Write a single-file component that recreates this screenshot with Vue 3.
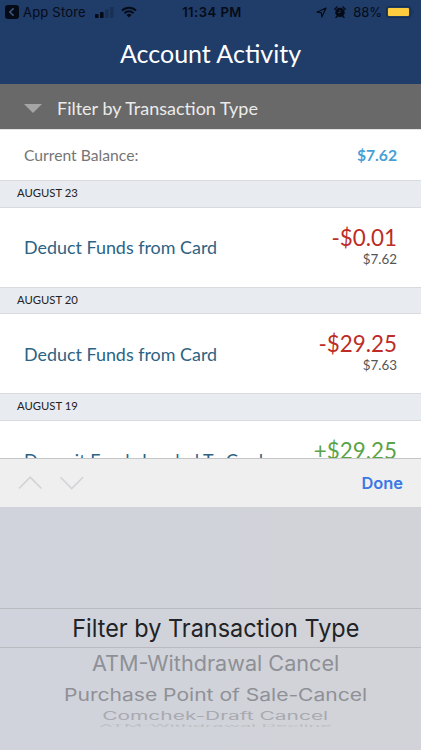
<template>
  <div class="screen">
    <header class="top">
      <div class="status">
        <div class="status-left">
          <svg class="back-icon" width="14" height="14" viewBox="0 0 14 14">
            <rect width="14" height="14" rx="3" fill="#050b16" />
            <path d="M8.6 3.4 4.8 7l3.8 3.6" fill="none" stroke="#3d5780" stroke-width="1.5" />
          </svg>
          <span class="app-store">App Store</span>
          <svg class="signal" width="19" height="12" viewBox="0 0 19 12">
            <rect x="0" y="8" width="3.6" height="4" rx="0.8" fill="#050b16" />
            <rect x="5" y="6" width="3.6" height="6" rx="0.8" fill="#050b16" />
            <rect x="10" y="3.5" width="3.6" height="8.5" rx="0.8" fill="#1a3156" />
            <rect x="15" y="1" width="3.6" height="11" rx="0.8" fill="#1a3156" />
          </svg>
          <svg class="wifi" width="16" height="12" viewBox="0 0 16 12">
            <path d="M1 4.6a10 10 0 0 1 14 0M3.5 7.2a6.4 6.4 0 0 1 9 0" fill="none" stroke="#050b16" stroke-width="2" />
            <path d="M8 11.5 5.5 9a3.6 3.6 0 0 1 5 0z" fill="#050b16" />
          </svg>
        </div>
        <span class="time">11:34 PM</span>
        <div class="status-right">
          <svg class="location" width="11" height="11" viewBox="0 0 11 11">
            <path d="M10 1 1 5.2l4.3.5.5 4.3z" fill="none" stroke="#050b16" stroke-width="1.2" stroke-linejoin="round" />
          </svg>
          <svg class="alarm" width="12" height="12" viewBox="0 0 12 12">
            <circle cx="6" cy="6.4" r="4.7" fill="#050b16" />
            <path d="M.8 3.2 3 1M11.2 3.2 9 1M3 10.2l-1 1.2M9 10.2l1 1.2" stroke="#050b16" stroke-width="1.5" stroke-linecap="round" />
            <path d="M6 4v2.6H4" fill="none" stroke="#1f3d6b" stroke-width=".8" />
          </svg>
          <span class="percent">88%</span>
          <svg class="battery" width="29" height="12" viewBox="0 0 29 12">
            <rect x=".5" y=".5" width="24.5" height="11" rx="2.6" fill="none" stroke="#172b4b" />
            <rect x="2" y="2" width="21" height="8" rx="1" fill="#fdcd3f" />
            <path d="M27 4q1.8 2 0 4z" fill="#172b4b" />
          </svg>
        </div>
      </div>
      <h1 class="title">Account Activity</h1>
    </header>

    <div class="filter">
      <span class="triangle"></span>
      <span class="filter-label">{{ options[0].label }}</span>
    </div>

    <div class="balance">
      <span class="balance-label">Current Balance:</span>
      <span class="balance-value">$7.62</span>
    </div>

    <main class="list">
      <section v-for="item in transactions" :key="item.date">
        <h2 class="date">{{ item.date }}</h2>
        <div class="row">
          <span class="name">{{ item.name }}</span>
          <div class="sums">
            <span class="amount" :class="{ plus: item.plus }">{{ item.amount }}</span>
            <span v-if="item.balance" class="rest">{{ item.balance }}</span>
          </div>
        </div>
      </section>
    </main>

    <div class="toolbar">
      <svg class="arrows" width="66" height="16" viewBox="0 0 66 16">
        <path d="M1 13.5 12.2 2.2l11.2 11.3M42.5 2.2l11.2 11.3L65 2.2" fill="none" stroke="#d2d3d5" stroke-width="1.6" />
      </svg>
      <button class="done">Done</button>
    </div>

    <div class="picker">
      <div v-for="(option, i) in options" :key="i" class="option" :class="'option-' + i">
        <span>{{ option.label }}</span>
      </div>
    </div>
  </div>
</template>

<script setup>
const transactions = [
  { date: 'AUGUST 23', name: 'Deduct Funds from Card', amount: '-$0.01', balance: '$7.62' },
  { date: 'AUGUST 20', name: 'Deduct Funds from Card', amount: '-$29.25', balance: '$7.63' },
  { date: 'AUGUST 19', name: 'Deposit Funds Loaded To Card', amount: '+$29.25', plus: true }
];

const options = [
  { label: 'Filter by Transaction Type' },
  { label: 'ATM-Withdrawal Cancel' },
  { label: 'Purchase Point of Sale-Cancel' },
  { label: 'Comchek-Draft Cancel' },
  { label: 'ATM-Withdrawal Decline' }
];
</script>

<style>
body {
  background: #fff;
}
</style>

<style scoped>
.screen {
  width: 421px;
  height: 750px;
  display: flex;
  flex-direction: column;
  overflow: hidden;
  background: #fff;
  font-family: Lato, sans-serif;
}

.top {
  flex: none;
  height: 84px;
  background: #203c69;
}

.status {
  height: 24px;
  display: grid;
  grid-template-columns: 1fr auto 1fr;
  align-items: center;
  color: #050b16;
  font-family: Inter, sans-serif;
  font-size: 13px;
}

.status-left,
.status-right {
  display: flex;
  align-items: center;
}

.status-left {
  padding-left: 5px;
}

.status-right {
  justify-content: flex-end;
  padding-right: 6px;
}

.app-store {
  margin-left: 4px;
  letter-spacing: 0.2px;
}

.signal {
  margin-left: 9px;
}

.wifi {
  margin-left: 7px;
}

.time {
  padding-left: 3px;
  font-weight: 600;
  letter-spacing: 0.5px;
}

.alarm {
  margin-left: 7px;
}

.percent {
  margin: 0 4px 0 7px;
}

.title {
  margin: 13px 0 0;
  color: #fff;
  font-size: 25px;
  line-height: 32px;
  font-weight: 400;
  text-align: center;
}

.filter {
  flex: none;
  height: 46px;
  display: flex;
  align-items: center;
  padding: 3px 0 0 24px;
  border-bottom: 1px solid #e4e4e4;
  background: #696969;
  box-sizing: border-box;
}

.triangle {
  border: 9px solid transparent;
  border-top-color: #a5a5a5;
  border-bottom: 0;
}

.filter-label {
  margin-left: 15px;
  color: #ebebeb;
  font-size: 18px;
}

.balance {
  flex: none;
  height: 50px;
  display: flex;
  align-items: center;
  justify-content: space-between;
  padding: 0 24px;
  box-sizing: border-box;
}

.balance-label {
  color: #757575;
  font-size: 15.7px;
}

.balance-value {
  color: #479fd6;
  font-size: 15.7px;
  font-weight: 700;
}

.list {
  flex: none;
  height: 277.5px;
  overflow: hidden;
}

.date {
  height: 27.6px;
  margin: 0;
  padding-left: 17px;
  box-sizing: border-box;
  border-top: 1px solid #d8dadd;
  border-bottom: 1px solid #d8dadd;
  background: #e8ebf0;
  color: #222;
  font-size: 11.3px;
  line-height: 24.6px;
  font-weight: 400;
}

.row {
  height: 79px;
  display: flex;
  align-items: center;
  justify-content: space-between;
  padding: 0 24px;
  box-sizing: border-box;
}

.name {
  color: #2c6384;
  font-size: 17.9px;
}

.sums {
  height: 47px;
  display: flex;
  flex-direction: column;
  align-items: flex-end;
}

.amount {
  color: #bd2c25;
  font-size: 22.4px;
  line-height: 27px;
}

.plus {
  color: #5ba348;
}

.rest {
  color: #555;
  font-size: 13.4px;
  line-height: 16px;
}

.toolbar {
  flex: none;
  height: 49px;
  display: flex;
  align-items: center;
  justify-content: space-between;
  padding: 0 18px;
  box-sizing: border-box;
  border-top: 1px solid #c5c6ca;
  background: #efeff0;
}

.done {
  padding: 0;
  border: 0;
  background: none;
  color: #3b78e7;
  font-family: Inter, sans-serif;
  font-size: 16.4px;
  font-weight: 600;
}

.picker {
  flex: 1;
  display: flex;
  flex-direction: column;
  padding-top: 100.5px;
  border-top: 1px solid #cfd2d7;
  background: linear-gradient(90deg, #d0d3dc, #d2d3d8);
  color: #8e9096;
  font-family: Inter, sans-serif;
  font-size: 23px;
  text-align: center;
}

.option {
  flex: none;
  display: flex;
  align-items: center;
  justify-content: center;
  padding-left: 10px;
  white-space: nowrap;
}

.option-0 {
  height: 38px;
  border-top: 1px solid #b9bbc1;
  border-bottom: 1px solid #b9bbc1;
  color: #222326;
}

.option-1 {
  height: 32px;
}

.option-2 {
  height: 29px;
}

.option-3 {
  height: 14px;
}

.option-4 {
  height: 5px;
}

.option-0 span {
  transform: translateY(1px) scale(1.02, 1.05);
}

.option-1 span {
  transform: scale(0.94, 0.92);
}

.option-2 span {
  transform: scale(0.915, 0.74);
}

.option-3 span {
  color: #a8aab0;
  transform: scale(0.91, 0.48);
}

.option-4 span {
  color: #bcbec4;
  transform: scale(0.865, 0.15);
}
</style>
